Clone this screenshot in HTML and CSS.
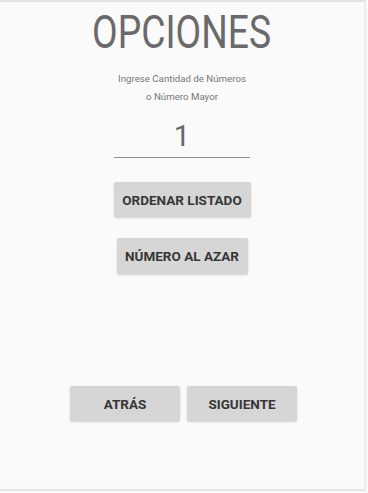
FILE: index.html
```
<!DOCTYPE html>
<html>
<head>
<meta charset="utf-8">
<link rel="stylesheet" href="styles.css">
</head>
<body>
<div class="screen">
  <h1 class="title"><span class="title-text">OPCIONES</span></h1>
  <p class="hint">Ingrese Cantidad de Números<br>o Número Mayor</p>
  <div class="field"><span class="value">1</span></div>
  <button class="btn btn-order">ORDENAR LISTADO</button>
  <button class="btn btn-random">NÚMERO AL AZAR</button>
  <div class="nav">
    <button class="btn btn-nav">ATRÁS</button>
    <button class="btn btn-nav">SIGUIENTE</button>
  </div>
</div>
</body>
</html>
```
FILE: styles.css
```
html, body {
  margin: 0;
  padding: 0;
  background: #fafafa;
}
.screen {
  width: 366px;
  height: 491px;
  border-top: 2px solid #e2e2e2;
  border-right: 2px solid #ececec;
  border-bottom: 2px solid #e6e6e6;
  box-sizing: border-box;
  display: flex;
  flex-direction: column;
  align-items: center;
  font-family: Roboto, "Liberation Sans", sans-serif;
}
.title {
  margin: 3px 0 0 0;
  font-size: 46px;
  font-weight: 400;
  color: #6a6a6a;
  line-height: 54px;
  text-align: center;
}
.title-text {
  display: inline-block;
  transform: scaleX(0.81);
}
.hint {
  margin: 11px 0 0 0;
  font-size: 9.7px;
  line-height: 18px;
  color: #777;
  text-align: center;
}
.field {
  margin-top: 13px;
  width: 136px;
  border-bottom: 1px solid #8a8a8a;
  text-align: center;
  padding-bottom: 4px;
}
.value {
  font-size: 29px;
  line-height: 34px;
  color: #666;
}
.btn {
  border: none;
  background: #d6d6d6;
  border-radius: 2px;
  box-shadow: 0 1px 2px rgba(0,0,0,0.18);
  font-family: Roboto, "Liberation Sans", sans-serif;
  font-weight: 700;
  font-size: 13.5px;
  color: #363636;
  height: 35px;
  padding: 0;
  cursor: pointer;
}
.btn-order {
  margin-top: 24px;
  width: 137px;
}
.btn-random {
  margin-top: 21px;
  width: 131px;
  height: 36px;
}
.nav {
  margin-top: 112px;
  margin-left: 3px;
  display: flex;
  gap: 7px;
}
.btn-nav {
  width: 110px;
}
```
